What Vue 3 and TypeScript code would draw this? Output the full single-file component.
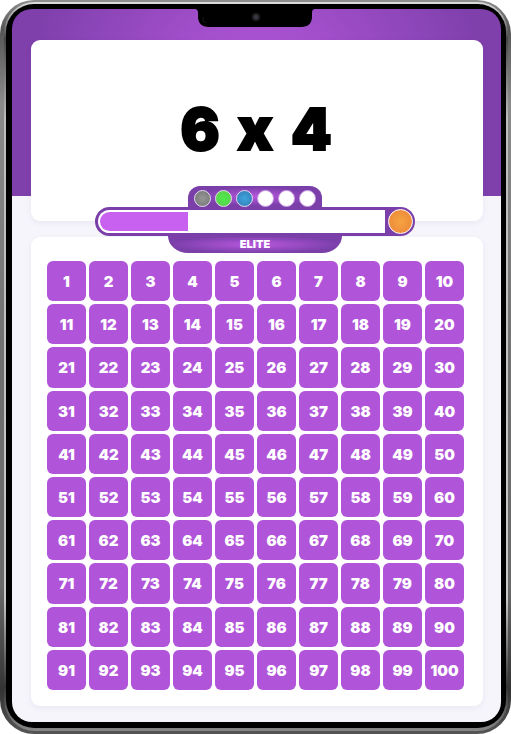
<script setup lang="ts">
import { computed, ref } from 'vue'

interface Pip {
  id: number
  tone: 'grey' | 'green' | 'blue' | 'empty'
}

const left = ref(6)
const right = ref(4)
const rank = ref('ELITE')
const progress = ref(31)
const picked = ref<number | null>(null)

const pips: Pip[] = [
  { id: 1, tone: 'grey' },
  { id: 2, tone: 'green' },
  { id: 3, tone: 'blue' },
  { id: 4, tone: 'empty' },
  { id: 5, tone: 'empty' },
  { id: 6, tone: 'empty' },
]

const answers = Array.from({ length: 100 }, (_, i) => i + 1)
const question = computed(() => [left.value, 'x', right.value])

function pick(value: number): void {
  picked.value = value
}
</script>

<template>
  <div class="device">
    <div class="rim">
      <div class="bezel">
        <main class="screen">
          <svg class="notch" viewBox="0 0 120 18" width="120" height="18" aria-hidden="true">
            <path d="M0 0H120Q117 0 117 4V7Q117 18 106 18H14Q3 18 3 7V4Q3 0 0 0Z" fill="#000" />
            <circle cx="61" cy="8" r="4" fill="#202025" />
            <circle cx="61" cy="8" r="2" fill="#3c3c44" />
            <path d="M8 8V12L11 14" fill="none" stroke="#17171a" />
          </svg>

          <section class="card question">
            <h1>
              <span v-for="(part, i) in question" :key="i">{{ part }}</span>
            </h1>
            <div class="meter">
              <div class="pips">
                <span v-for="pip in pips" :key="pip.id" class="pip" :class="pip.tone"></span>
              </div>
              <div class="bar">
                <div
                  class="track"
                  role="progressbar"
                  :aria-valuenow="progress"
                  aria-valuemin="0"
                  aria-valuemax="100"
                >
                  <div class="fill" :style="{ width: progress + '%' }"></div>
                </div>
                <span class="goal"></span>
              </div>
              <div class="rank">{{ rank }}</div>
            </div>
          </section>

          <section class="card board">
            <button
              v-for="n in answers"
              :key="n"
              type="button"
              class="tile"
              @click="pick(n)"
            >{{ n }}</button>
          </section>
        </main>
      </div>
    </div>
  </div>
</template>

<style>
body {
  margin: 0;
  background: #fff;
}
</style>

<style scoped>
.device,
.device * {
  box-sizing: border-box;
}

.device {
  display: flex;
  min-height: 100vh;
  padding: 2px 3px 3px 4px;
  border-radius: 34px;
  font-family: Inter, 'Liberation Sans', sans-serif;
  background: linear-gradient(
    180deg,
    #8f8f8f 0%,
    #555 4%,
    #8b8b8b 14%,
    #707070 50%,
    #6a6a6a 80%,
    #333 94%,
    #555 100%
  );
}

.rim {
  display: flex;
  flex: 1;
  padding: 2px 2px 3px 2px;
  border-radius: 31px;
  background: linear-gradient(180deg, #ddd 0%, #aaa 2%, #444 5%, #bdbdbd 16%, #c8c8c8 82%, #333 94%, #888 100%);
}

.bezel {
  display: flex;
  flex: 1;
  padding: 5px 5px 6px 6px;
  border-radius: 28px;
  background: #000;
}

.screen {
  position: relative;
  display: flex;
  flex: 1;
  flex-direction: column;
  gap: 16px;
  padding: 31px 18px 16px 19px;
  border-radius: 20px;
  background:
    radial-gradient(circle at 50% 50%, #b958df 0, #7f40ac 230px) top / 100% 187px no-repeat,
    #f6f5fc;
}

.notch {
  position: absolute;
  top: 0;
  left: 50%;
  margin-left: -62px;
}

.card {
  border-radius: 9px;
  background: #fff;
  box-shadow: 0 2px 6px rgba(40, 30, 70, 0.06);
}

.question {
  position: relative;
  display: flex;
  justify-content: center;
  height: 181px;
  padding: 54px 2px 0 0;
}

.question h1 {
  display: flex;
  gap: 18px;
  margin: 0;
  font-size: 58px;
  font-weight: 900;
  line-height: 70px;
  color: #000;
  -webkit-text-stroke: 2px #000;
}

.meter {
  position: absolute;
  right: 68px;
  bottom: -32px;
  left: 64px;
  display: flex;
  flex-direction: column;
  align-items: center;
}

.pips {
  display: flex;
  gap: 4px;
  height: 21px;
  padding: 4px 6px 0;
  border-radius: 12px 12px 0 0;
  background: radial-gradient(ellipse at 50% 50%, #b958df 0, #7a3fa9 60px);
}

.pip {
  width: 17px;
  height: 17px;
  border: 1px solid #e6dcef;
  border-radius: 50%;
}

.pip.grey {
  background: radial-gradient(circle, #969696, #747474);
}

.pip.green {
  background: radial-gradient(circle, #4bec4b, #62c950);
}

.pip.blue {
  background: radial-gradient(circle, #3da5dc, #3578b5);
}

.pip.empty {
  border-color: #c79ae0;
  background: #fff;
}

.bar {
  display: flex;
  align-self: stretch;
  align-items: center;
  gap: 3px;
  height: 29px;
  padding: 2px;
  padding-left: 3px;
  border-radius: 15px;
  background: #7a3fa9;
}

.track {
  flex: 1;
  height: 23px;
  padding: 2px 0 2px 2px;
  border-radius: 12px 0 0 12px;
  background: #fff;
}

.fill {
  height: 100%;
  border-radius: 10px 0 0 10px;
  background: #c961f0;
}

.goal {
  width: 25px;
  height: 25px;
  border: 1px solid #fff;
  border-radius: 50%;
  background: radial-gradient(circle, #f5a341, #ec8439);
}

.rank {
  width: 174px;
  height: 17px;
  border-radius: 0 0 20px 20px / 0 0 17px 17px;
  font-size: 11px;
  font-weight: 900;
  line-height: 16px;
  text-align: center;
  color: #fff;
  background: radial-gradient(ellipse at 50% 50%, #b958df 0, #7a3fa9 86px);
}

.board {
  display: grid;
  flex: 1;
  grid-template-columns: repeat(10, minmax(0, 1fr));
  grid-auto-rows: 1fr;
  gap: 3px;
  padding: 24px 19px 16px 16px;
}

.tile {
  padding: 2px 0 0;
  border: 0;
  border-radius: 6px;
  font-family: inherit;
  font-size: 15px;
  font-weight: 900;
  line-height: 20px;
  color: #fff;
  background: #b055d9;
  cursor: pointer;
}
</style>
